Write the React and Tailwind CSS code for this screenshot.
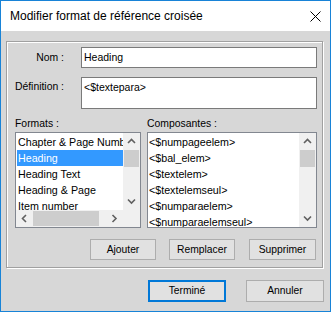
import React from "react";

const arrowPaths = {
  up: "M1 5 L4.5 1.5 L8 5",
  down: "M1 1.5 L4.5 5 L8 1.5",
  left: "M5 1 L1.5 4.5 L5 8",
  right: "M1.5 1 L5 4.5 L1.5 8",
};

function Arrow({ dir }) {
  const vertical = dir === "up" || dir === "down";
  return (
    <svg
      width={vertical ? 9 : 7}
      height={vertical ? 7 : 9}
      viewBox={vertical ? "0 0 9 7" : "0 0 7 9"}
    >
      <path d={arrowPaths[dir]} stroke="#606060" strokeWidth="1.6" fill="none" />
    </svg>
  );
}

function VScroll() {
  return (
    <div className="w-[17px] bg-[#f0f0f0] flex flex-col">
      <div className="h-[17px] flex items-center justify-center">
        <Arrow dir="up" />
      </div>
      <div className="h-[17px] mx-[1px] bg-[#cdcdcd]" />
      <div className="flex-1" />
      <div className="h-[17px] flex items-center justify-center">
        <Arrow dir="down" />
      </div>
    </div>
  );
}

function HScroll() {
  return (
    <div className="flex-1 h-[17px] bg-[#f0f0f0] flex">
      <div className="w-[17px] flex items-center justify-center">
        <Arrow dir="left" />
      </div>
      <div className="w-[66px] my-[1px] bg-[#cdcdcd]" />
      <div className="flex-1" />
      <div className="w-[17px] flex items-center justify-center">
        <Arrow dir="right" />
      </div>
    </div>
  );
}

const formats = ["Chapter & Page Number", "Heading", "Heading Text", "Heading & Page", "Item number"];
const composantes = [
  "<$numpageelem>",
  "<$bal_elem>",
  "<$textelem>",
  "<$textelemseul>",
  "<$numparaelem>",
  "<$numparaelemseul>",
];

function Row({ text, selected }) {
  return (
    <div
      className={
        "h-[16px] leading-[16px] pl-[1px] whitespace-nowrap text-[10.7px] " +
        (selected ? "bg-[#3399ff] text-white" : "text-black")
      }
    >
      {text}
    </div>
  );
}

function Button({ children, width, isDefault }) {
  return (
    <div
      className={
        "flex items-center justify-center bg-[#e1e1e1] text-[10.3px] text-black " +
        (isDefault ? "border-2 border-[#0078d7] h-[22px]" : "border border-[#adadad]") +
        " " +
        width
      }
    >
      {children}
    </div>
  );
}

export default function App() {
  return (
    <div className="w-[331px] h-[312px] border border-[#1883d7] flex flex-col font-['Liberation_Sans',Arial,sans-serif] text-black">
      <div className="h-[30px] bg-white flex items-center justify-between pl-[9px] pr-[9px]">
        <span className="text-[12px]">Modifier format de référence croisée</span>
        <svg width="11" height="11" viewBox="0 0 11 11">
          <path d="M0.5 0.5 L10.5 10.5 M10.5 0.5 L0.5 10.5" stroke="#000" strokeWidth="1" fill="none" />
        </svg>
      </div>

      <div className="flex-1 bg-[#d7d7d7] flex flex-col pt-[10px] pl-[5px]">
        <div className="w-[317px] border border-[#a0a0a0] shadow-[inset_1px_1px_0_#fff,1px_1px_0_#fff] flex flex-col pt-[5px] pb-[7px]">
          <div className="flex items-center">
            <div className="w-[57px] text-right text-[10.4px]">Nom :</div>
            <div className="ml-[17px] w-[236px] h-[21px] bg-white border border-[#7a7a7a] flex items-center pl-[2px] text-[10.5px]">
              Heading
            </div>
          </div>
          <div className="flex items-start mt-[9px]">
            <div className="w-[57px] h-[20px] leading-[20px] text-right text-[10.4px]">Définition :</div>
            <div className="ml-[17px] w-[236px] h-[32px] bg-white border border-[#7a7a7a] pl-[2px] pt-[3px] leading-[13px] text-[10.5px]">
              {"<$textepara>"}
            </div>
          </div>

          <div className="flex mt-[8px] pl-[8px] gap-[6px]">
            <div className="w-[126px] flex flex-col">
              <div className="h-[13px] leading-[13px] text-[10.4px]">Formats :</div>
              <div className="mt-[2px] h-[96px] border border-[#828790] bg-white flex flex-col">
                <div className="flex flex-1 min-h-0">
                  <div className="flex-1 overflow-hidden pt-[1px] pl-[1px]">
                    {formats.map((f) => (
                      <Row key={f} text={f} selected={f === "Heading"} />
                    ))}
                  </div>
                  <VScroll />
                </div>
                <div className="flex">
                  <HScroll />
                  <div className="w-[17px] h-[17px] bg-[#f0f0f0]" />
                </div>
              </div>
            </div>
            <div className="w-[170px] flex flex-col">
              <div className="h-[13px] leading-[13px] text-[10.4px]">Composantes :</div>
              <div className="mt-[2px] h-[96px] border border-[#828790] bg-white flex">
                <div className="flex-1 overflow-hidden pt-[1px]">
                  {composantes.map((c) => (
                    <Row key={c} text={c} />
                  ))}
                </div>
                <VScroll />
              </div>
            </div>
          </div>

          <div className="flex mt-[11px] h-[21px]">
            <div className="ml-[83px]">
              <Button width="w-[66px] h-[21px]">Ajouter</Button>
            </div>
            <div className="ml-[13px]">
              <Button width="w-[66px] h-[21px]">Remplacer</Button>
            </div>
            <div className="ml-[14px]">
              <Button width="w-[67px] h-[21px]">Supprimer</Button>
            </div>
          </div>
        </div>

        <div className="flex justify-end gap-[20px] pr-[6px] mt-[12px]">
          <Button width="w-[78px]" isDefault>
            Terminé
          </Button>
          <Button width="w-[78px] h-[22px]">Annuler</Button>
        </div>
      </div>
    </div>
  );
}
